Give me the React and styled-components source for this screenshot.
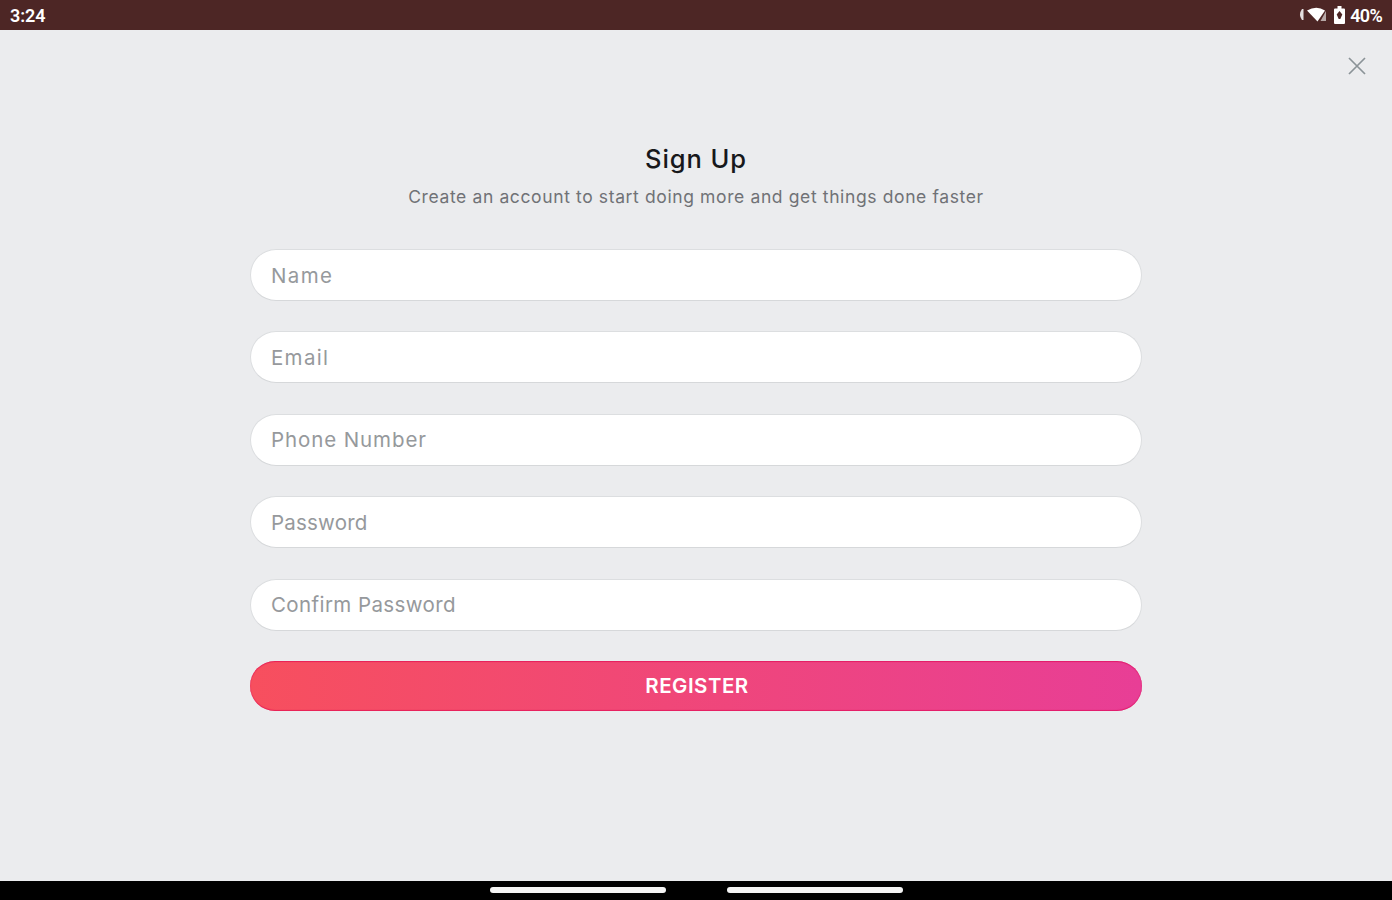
import React, { useState } from 'react'
import styled, { createGlobalStyle } from 'styled-components'

const GlobalStyle = createGlobalStyle`
  * {
    box-sizing: border-box;
  }

  body {
    margin: 0;
    font-family: Inter, "Liberation Sans", sans-serif;
    overflow: hidden;
  }
`

const Screen = styled.div`
  display: flex;
  flex-direction: column;
  width: 100%;
  height: 100vh;
  background: #ebecee;
`

const StatusBar = styled.header`
  display: flex;
  align-items: center;
  justify-content: space-between;
  height: 30px;
  padding: 2px 10px 0;
  background: #4d2625;
  color: #fff;
`

const StatusText = styled.span`
  font-family: Roboto, sans-serif;
  font-size: 18px;
  font-weight: 600;
  line-height: 28px;
  letter-spacing: ${({ spacing }) => spacing};
`

const StatusIcons = styled.div`
  display: flex;
  align-items: center;
`

const Toolbar = styled.div`
  display: flex;
  justify-content: flex-end;
  height: 114px;
  padding: 26px 25px 0 0;
`

const CloseButton = styled.button`
  display: flex;
  width: 20px;
  height: 20px;
  padding: 0;
  border: 0;
  background: none;
`

const Form = styled.form`
  display: flex;
  flex: 1;
  flex-direction: column;
  width: 892px;
  margin: 0 auto;
`

const Title = styled.h1`
  margin: 0;
  color: #17181b;
  font-size: 25.5px;
  font-weight: 500;
  line-height: 30px;
  letter-spacing: 0.9px;
  text-align: center;
`

const Subtitle = styled.p`
  margin: 12px 0 41px;
  color: #707276;
  font-size: 17.5px;
  line-height: 22px;
  letter-spacing: 0.62px;
  text-align: center;
  white-space: nowrap;
`

const Field = styled.input`
  width: 100%;
  height: 52px;
  margin-bottom: 30.4px;
  padding: 0 20px;
  border: 1px solid #dcdee0;
  border-bottom-color: #d6d8da;
  border-radius: 26px;
  background: #fff;
  color: #17181b;
  font-family: inherit;
  font-size: 20.5px;
  letter-spacing: ${({ spacing }) => spacing};
  outline: none;

  &::placeholder {
    color: #96999c;
    opacity: 1;
  }
`

const RegisterButton = styled.button`
  height: 50px;
  padding: 0 0 0 2px;
  border: 0;
  border-radius: 25px;
  background: linear-gradient(90deg, #f74f5e, #e83e96);
  box-shadow: inset 0 1px 1px rgba(222, 0, 80, 0.6), inset 0 -1px 1px rgba(222, 0, 80, 0.6);
  color: #fff;
  font-family: inherit;
  font-size: 20.5px;
  font-weight: 600;
  letter-spacing: 0.5px;
`

const NavigationBar = styled.footer`
  display: flex;
  justify-content: center;
  gap: 61px;
  height: 19px;
  padding-top: 6px;
  background: #000;
`

const Handle = styled.div`
  width: 176px;
  height: 6px;
  border-radius: 3px;
  background: #f4f4f4;
`

const fields = [
  { name: 'name', label: 'Name', spacing: '1.4px' },
  { name: 'email', label: 'Email', spacing: '1.3px' },
  { name: 'phone', label: 'Phone Number', spacing: '0.9px' },
  { name: 'password', label: 'Password', spacing: '0.2px' },
  { name: 'confirm', label: 'Confirm Password', spacing: '0.4px' },
]

const SystemIcons = () => (
  <svg width="52" height="20" viewBox="0 0 52 20" fill="#fff">
    <path d="M4 3Q0 8.500 4 14H5.500V3Z" opacity="0.85" />
    <path d="M9 4.500Q18.500-1 27 4.500L19.500 15.500Z" />
    <path d="M28 5V15H22.500Z" opacity="0.6" />
    <path d="M37 2.500h2.500V0h4v2.500H46q1 0 1 1V17q0 1-1 1h-9q-1 0-1-1V3.500q0-1 1-1Z" />
    <path d="M41.500 5l2.800 3.500-2 4.500h-1.600l-2-4.500Z" fill="#4d2625" />
  </svg>
)

const App = () => {
  const [values, setValues] = useState({})

  const updateValue = ({ target }) => {
    setValues({ ...values, [target.name]: target.value })
  }

  return (
    <>
      <GlobalStyle />
      <Screen>
        <StatusBar>
          <StatusText spacing="-0.1px">3:24</StatusText>
          <StatusIcons>
            <SystemIcons />
            <StatusText spacing="-0.7px">40%</StatusText>
          </StatusIcons>
        </StatusBar>
        <Toolbar>
          <CloseButton aria-label="Close">
            <svg width="20" height="20" viewBox="0 0 20 20" fill="none" stroke="#8b9397" strokeWidth="1.7">
              <path d="M2 2l16 16M18 2L2 18" />
            </svg>
          </CloseButton>
        </Toolbar>
        <Form onSubmit={(event) => event.preventDefault()}>
          <Title>Sign Up</Title>
          <Subtitle>Create an account to start doing more and get things done faster</Subtitle>
          {fields.map(({ name, label, spacing }) => (
            <Field
              key={name}
              name={name}
              type={name === 'password' || name === 'confirm' ? 'password' : 'text'}
              placeholder={label}
              spacing={spacing}
              value={values[name] || ''}
              onChange={updateValue}
            />
          ))}
          <RegisterButton>REGISTER</RegisterButton>
        </Form>
        <NavigationBar>
          <Handle />
          <Handle />
        </NavigationBar>
      </Screen>
    </>
  )
}

export default App
